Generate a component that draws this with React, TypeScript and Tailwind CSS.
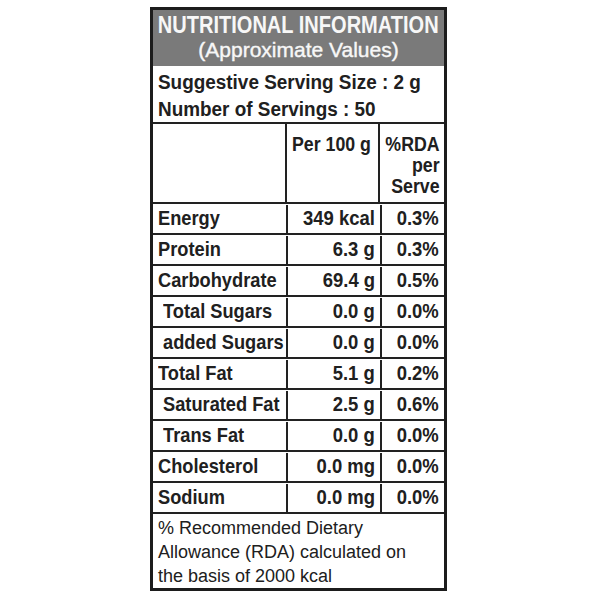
const rows = [
  { name: 'Energy', per100: '349 kcal', rda: '0.3%', indent: false },
  { name: 'Protein', per100: '6.3 g', rda: '0.3%', indent: false },
  { name: 'Carbohydrate', per100: '69.4 g', rda: '0.5%', indent: false },
  { name: 'Total Sugars', per100: '0.0 g', rda: '0.0%', indent: true },
  { name: 'added Sugars', per100: '0.0 g', rda: '0.0%', indent: true },
  { name: 'Total Fat', per100: '5.1 g', rda: '0.2%', indent: false },
  { name: 'Saturated Fat', per100: '2.5 g', rda: '0.6%', indent: true },
  { name: 'Trans Fat', per100: '0.0 g', rda: '0.0%', indent: true },
  { name: 'Cholesterol', per100: '0.0 mg', rda: '0.0%', indent: false },
  { name: 'Sodium', per100: '0.0 mg', rda: '0.0%', indent: false },
];

export default function App() {
  return (
    <div className="min-h-[600px] bg-white pt-[7px] font-['Liberation_Sans',Arial,sans-serif] text-[#202020]">
      <div className="ml-[150px] w-[297px] border-[3px] border-[#1c1c1c]">
        {/* header */}
        <div className="h-[56px] bg-[#7a7a7a] pt-[2px] text-center text-[#f7f7f7]">
          <div className="flex justify-center">
            <span className="shrink-0 scale-x-[0.835] whitespace-nowrap text-[24px] font-bold leading-[26px]">
              NUTRITIONAL INFORMATION
            </span>
          </div>
          <div className="text-[21px] leading-[24px] [-webkit-text-stroke:0.4px_#f7f7f7]">(Approximate Values)</div>
        </div>

        {/* serving */}
        <div className="h-[58px] border-b-2 border-[#222] pl-[5px] pt-[3px] text-[19.5px] font-bold leading-[27px]">
          <div>
            <span className="inline-block origin-left scale-x-[0.97] whitespace-nowrap">Suggestive Serving Size : 2 g</span>
          </div>
          <div>
            <span className="inline-block origin-left scale-x-[0.97] whitespace-nowrap">Number of Servings : 50</span>
          </div>
        </div>

        {/* table head */}
        <div className="flex h-[80px] border-b-2 border-[#222] text-[19.5px] font-bold leading-[21px]">
          <div className="w-[135px] border-r-2 border-[#222]" />
          <div className="w-[94px] border-r-2 border-[#222] pl-[5px] pt-[10px]">
            <span className="inline-block origin-left scale-x-[0.91] whitespace-nowrap">Per 100 g</span>
          </div>
          <div className="flex-1 pr-[4px] pt-[10px] text-right">
            <span className="inline-block origin-right scale-x-[0.91]">
              %RDA
              <br />
              per
              <br />
              Serve
            </span>
          </div>
        </div>

        {/* rows */}
        {rows.map((r) => (
          <div key={r.name} className="flex h-[31px] border-b-2 border-[#222] pt-px text-[20.5px] font-bold leading-[25px]">
            <div className={`w-[135px] border-r-2 border-[#222] ${r.indent ? 'pl-[10px]' : 'pl-[5px]'}`}>
              <span className="inline-block origin-left scale-x-[0.89] whitespace-nowrap">{r.name}</span>
            </div>
            <div className="w-[94px] border-r-2 border-[#222] pr-[5px] text-right">
              <span className="inline-block origin-right scale-x-[0.9] whitespace-nowrap">{r.per100}</span>
            </div>
            <div className="flex-1 pr-[5px] text-right">
              <span className="inline-block origin-right scale-x-[0.9] whitespace-nowrap">{r.rda}</span>
            </div>
          </div>
        ))}

        {/* footnote */}
        <div className="h-[74px] pl-[5px] pt-[2px] text-[18px] leading-[24px]">
          % Recommended Dietary
          <br />
          Allowance (RDA) calculated on
          <br />
          the basis of 2000 kcal
        </div>
      </div>
    </div>
  );
}
